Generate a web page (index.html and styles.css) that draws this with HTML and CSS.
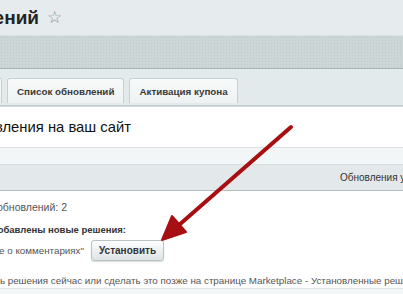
FILE: index.html
```html
<!DOCTYPE html>
<html lang="ru">
<head>
    <meta charset="UTF-8">
    <title>Обновление платформы</title>
    <link rel="stylesheet" href="styles.css">
</head>
<body>

<div class="page">
    <div class="page-header">
        <div class="clip clip-title"><h1>Установка обновлений</h1></div>
        <span class="star">☆</span>
    </div>

    <div class="toolbar"></div>

    <div class="tabs">
        <div class="tab tab-cut"></div>
        <div class="tab">Список обновлений</div>
        <div class="tab">Активация купона</div>
    </div>

    <div class="box-title">
        <div class="clip clip-h2"><h2>Установить обновления на ваш сайт</h2></div>
    </div>
    <div class="box-gap"></div>

    <div class="grid-head">
        <span>Обновления у вас на сайте</span>
    </div>

    <div class="panel">
        <div class="line">
            <div class="clip clip-count"><span>Всего обновлений: 2</span></div>
        </div>
        <div class="line line-bold">
            <div class="clip clip-bold"><span>Добавлены новые решения:</span></div>
        </div>
        <div class="line line-module">
            <div class="clip clip-module"><span>"Уведомление о комментариях"</span></div>
            <button class="install-btn">Установить</button>
        </div>
        <div class="line line-note">
            <div class="clip clip-note"><span>Вы можете установить</span></div>
            <span>&nbsp;решения сейчас или сделать это позже на странице Marketplace - Установленные решения</span>
        </div>
    </div>
    <div class="panel-bottom"></div>

    <svg class="arrow" width="403" height="294" viewBox="0 0 403 294">
        <line x1="291" y1="127" x2="179" y2="225" stroke="#a80f12" stroke-width="4" stroke-linecap="round"/>
        <polygon points="162,240 186,232 172,216" fill="#a80f12" stroke="#a80f12" stroke-width="2" stroke-linejoin="round"/>
    </svg>
</div>

</body>
</html>
```

FILE: styles.css
```css
body {
    margin: 0;
    font-family: 'Liberation Sans', Arial, sans-serif;
    background-color: #e6eced;
}

.page {
    position: relative;
    width: 403px;
    height: 294px;
    overflow: hidden;
}

/* left-cut text: the end of the text sits at the right edge of the box */
.clip {
    overflow: hidden;
    display: flex;
    justify-content: flex-end;
    flex-shrink: 0;
    white-space: nowrap;
}

.clip > * {
    flex-shrink: 0;
}

.page-header {
    height: 35px;
    display: flex;
    align-items: center;
    background-color: #e6eced;
}

.clip-title {
    width: 39px;
}

.page-header h1 {
    margin: 0;
    font-size: 19px;
    font-weight: bold;
    color: #222;
}

.star {
    margin-left: 8px;
    font-size: 17px;
    color: #8a9598;
}

.toolbar {
    height: 32px;
    background-color: #cdd6d7;
    background-image: radial-gradient(circle, #bfc9ca 0.7px, transparent 0.8px);
    background-size: 3px 3px;
    border-top: 1px solid #d8e0e1;
    border-bottom: 1px solid #aab5b6;
}

.tabs {
    height: 37px;
    display: flex;
    align-items: flex-end;
    gap: 5px;
    background-color: #e3eaeb;
    border-bottom: 1px solid #c3cccd;
    box-sizing: border-box;
}

.tab {
    height: 24px;
    margin-bottom: 2px;
    padding: 0 9px;
    display: flex;
    align-items: center;
    font-size: 9.8px;
    font-weight: bold;
    color: #3a3a3a;
    background: linear-gradient(#f8fafa, #eef2f2);
    border: 1px solid #c8d1d2;
    border-bottom: none;
    border-radius: 3px 3px 0 0;
}

.tab-cut {
    width: 0;
    padding: 0 1px;
    margin-left: -1px;
    border-left: none;
}

.box-title {
    height: 40px;
    display: flex;
    align-items: center;
    background-color: #fff;
    border-top: 1px solid #d5dcdd;
    border-bottom: 1px solid #dde3e4;
}

.clip-h2 {
    width: 131px;
}

.box-title h2 {
    margin: 0;
    font-size: 14.8px;
    font-weight: normal;
    color: #111;
}

.box-gap {
    height: 16px;
    background-color: #f2f6f7;
}

.grid-head {
    height: 25px;
    display: flex;
    align-items: center;
    padding-left: 340px;
    background-color: #e3e9ea;
    border-top: 1px solid #d9e0e1;
    border-bottom: 1px solid #b4bec0;
    font-size: 10px;
    color: #333;
    white-space: nowrap;
    overflow: hidden;
}

.panel {
    height: 98px;
    background-color: #fff;
    border-bottom: 1px solid #dfe4e5;
    padding-top: 9px;
    box-sizing: border-box;
    font-size: 10.5px;
    color: #555;
}

.line {
    height: 14px;
    display: flex;
    align-items: center;
    white-space: nowrap;
}

.clip-count {
    width: 67px;
}

.line-bold {
    margin-top: 8px;
    font-size: 9.5px;
    font-weight: bold;
    color: #333;
}

.clip-bold {
    width: 126px;
}

.line-module {
    height: 24px;
    margin-top: 2px;
    font-size: 9.8px;
}

.clip-module {
    width: 84px;
}

.install-btn {
    height: 21px;
    margin-left: 7px;
    padding: 0 7px;
    font-family: 'Liberation Sans', Arial, sans-serif;
    font-size: 10px;
    font-weight: bold;
    color: #333;
    background: linear-gradient(#fdfefe, #dde4e6);
    border: 1px solid #b9c3c5;
    border-radius: 3px;
    box-shadow: 0 1px 1px rgba(0, 0, 0, 0.15);
}

.line-note {
    margin-top: 11px;
    font-size: 9.8px;
}

.clip-note {
    width: 5px;
}

.panel-bottom {
    height: 10px;
    background-color: #f3f6f7;
}

.arrow {
    position: absolute;
    left: 0;
    top: 0;
    pointer-events: none;
}
```
